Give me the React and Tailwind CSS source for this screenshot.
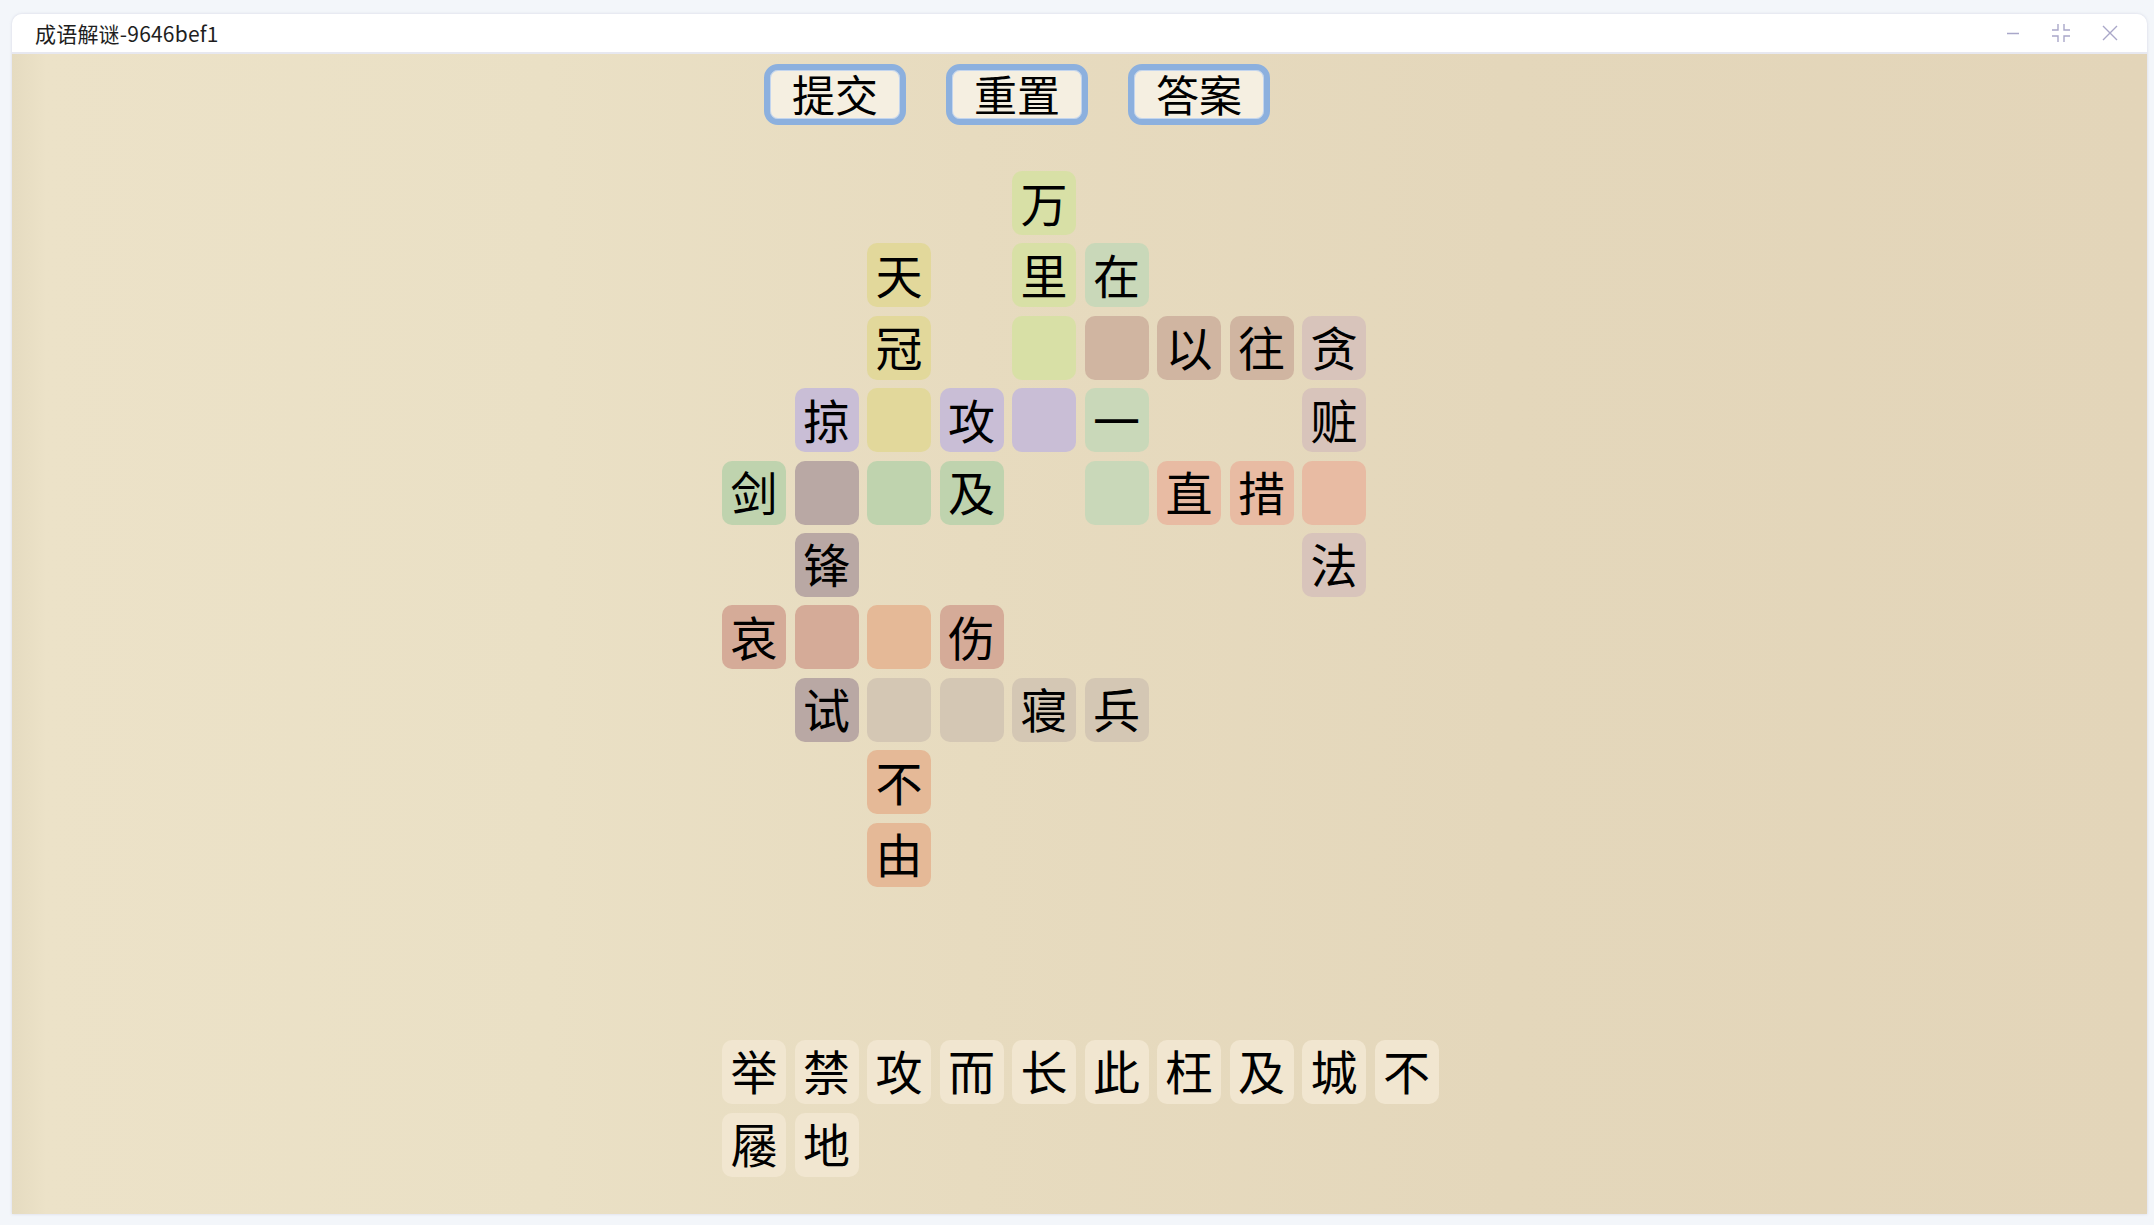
import React from "react";

const COLORS = {
  a: "bg-[#d8e0a6]",
  b: "bg-[#e2d89b]",
  c: "bg-[#c9d8b9]",
  d: "bg-[#d0b5a1]",
  e: "bg-[#d8c4bb]",
  f: "bg-[#c9bed6]",
  g: "bg-[#bfd3ae]",
  h: "bg-[#b9a8a4]",
  i: "bg-[#e8bba3]",
  j: "bg-[#d5ab98]",
  k: "bg-[#e5b997]",
  l: "bg-[#d4c7b4]",
};

// 盘面：每行 [颜色, 文字]，"." 为空位
const BOARD = [
  ["....a....", "    万    "],
  ["..b.ac...", "  天 里在   "],
  ["..b.addde", "  冠   以往贪"],
  [".fbffc..e", " 掠 攻 一  赃"],
  ["ghgg.ciii", "剑  及  直措 "],
  [".h......e", " 锋      法"],
  ["jjkj.....", "哀  伤     "],
  [".hllll...", " 试  寝兵   "],
  ["..k......", "  不      "],
  ["..k......", "  由      "],
];

const BANK = Array.from("举禁攻而长此枉及城不屦地");

const CJK = "font-['Noto_Sans_CJK_SC','Noto_Sans',sans-serif]";

function Tile({ ch, color }) {
  return (
    <div className={`w-16 h-16 rounded-[10px] flex items-center justify-center pb-[4px] text-[47px] leading-none text-black ${color}`}>
      {ch.trim()}
    </div>
  );
}

function ActionButton({ label }) {
  return (
    <button className="w-[142px] h-[61px] rounded-[14px] border-[6px] border-[#8cb0de] bg-[#f5efe1] shadow-[inset_0_0_0_1px_#c3d5ee] flex items-center justify-center pb-[2px] text-[43px] leading-none text-black">
      {label}
    </button>
  );
}

function TitleBar() {
  return (
    <div className="h-[40px] bg-white border-b-2 border-[#e7e8f0] flex items-center pl-[23px] pr-[28px]">
      <span className="text-[21px] tracking-[0.2px] text-[#1e1e1e] leading-none">成语解谜-9646bef1</span>
      <div className="ml-auto flex items-center gap-[30px] text-[#a9a7c9]">
        <svg width="16" height="16" viewBox="0 0 16 16">
          <path d="M2 8.5 H14" stroke="currentColor" strokeWidth="1.4" />
        </svg>
        <svg width="20" height="20" viewBox="0 0 20 20" fill="none">
          <path d="M7 1 V7 H1 M13 1 V7 H19 M7 19 V13 H1 M13 19 V13 H19" stroke="currentColor" strokeWidth="1.4" />
        </svg>
        <svg width="18" height="18" viewBox="0 0 18 18">
          <path d="M2 2 L16 16 M16 2 L2 16" stroke="currentColor" strokeWidth="1.4" />
        </svg>
      </div>
    </div>
  );
}

export default function App() {
  return (
    <div className={`w-[2154px] h-[1225px] bg-[#f3f6fa] pl-[12px] pr-[7px] pt-[14px] pb-[11px] ${CJK}`}>
      <div className="h-full flex flex-col rounded-t-[10px] overflow-hidden shadow-[0_0_3px_rgba(120,120,160,0.25)]">
        <TitleBar />
        <div className="flex-1 bg-[linear-gradient(to_right,#e5dbc0_0%,#ece2c8_1.6%,#eae0c5_25%,#e7dbbf_45%,#e4d7bb_70%,#e3d5b9_100%)] pl-[710px] pt-[10px]">
          <div className="flex gap-[40px] ml-[42px]">
            <ActionButton label="提交" />
            <ActionButton label="重置" />
            <ActionButton label="答案" />
          </div>

          <div className="mt-[46px] grid grid-cols-[repeat(9,64px)] gap-x-[8.5px] gap-y-[8.4px]">
            {BOARD.map(([colors, chars], r) => {
              const cs = Array.from(chars);
              return Array.from(colors).map((c, col) =>
                c === "." ? (
                  <div key={`${r}-${col}`} className="w-16 h-16" />
                ) : (
                  <Tile key={`${r}-${col}`} ch={cs[col] || " "} color={COLORS[c]} />
                )
              );
            })}
          </div>

          <div className="mt-[153px] grid grid-cols-[repeat(10,64px)] gap-x-[8.5px] gap-y-[9px]">
            {BANK.map((ch, i) => (
              <Tile key={i} ch={ch} color="bg-[#f1e6d0]" />
            ))}
          </div>
        </div>
      </div>
    </div>
  );
}
